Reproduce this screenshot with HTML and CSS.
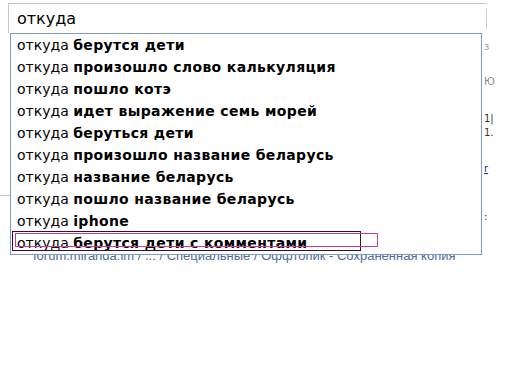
FILE: index.html
```html
<!DOCTYPE html>
<html lang="ru">
<head>
  <meta charset="UTF-8">
  <title>откуда</title>
  <link rel="stylesheet" href="styles.css">
</head>
<body>
  <div class="page">
    <div class="searchbox">
      <div class="query">откуда</div>
      <div class="edge"></div>
    </div>

    <div class="behind">
      <div class="snippet-line">forum.miranda.im / ... / Специальные / Оффтопик - Сохраненная копия</div>
    </div>

    <div class="left-tick"></div>

    <div class="side-bits">
      <span class="bit b1">з</span>
      <span class="bit b2">Ю</span>
      <span class="bit b3">1|</span>
      <span class="bit b5">1.</span>
      <span class="bit b6 link">r</span>
      <span class="bit b7">:</span>
    </div>

    <ul class="suggest">
      <li class="row">откуда <b>берутся дети</b></li>
      <li class="row">откуда <b>произошло слово калькуляция</b></li>
      <li class="row">откуда <b>пошло котэ</b></li>
      <li class="row">откуда <b>идет выражение семь морей</b></li>
      <li class="row">откуда <b>беруться дети</b></li>
      <li class="row">откуда <b>произошло название беларусь</b></li>
      <li class="row">откуда <b>название беларусь</b></li>
      <li class="row">откуда <b>пошло название беларусь</b></li>
      <li class="row">откуда <b>iphone</b></li>
      <li class="row selected">
        <span class="row-text">откуда <b>берутся дети с комментами</b></span>
        <span class="mark-dark"></span>
        <span class="mark-pink"></span>
      </li>
    </ul>
  </div>
</body>
</html>
```

FILE: styles.css
```css
body {
  margin: 0;
  background: #ffffff;
  font-family: 'DejaVu Sans', Verdana, sans-serif;
  color: #000000;
}

.page {
  position: relative;
  width: 512px;
  height: 384px;
  overflow: hidden;
}

.searchbox {
  display: flex;
  align-items: center;
  margin: 3px 0 0 8px;
  width: 478px;
  height: 29px;
  border-top: 1px solid #c6c6c6;
  border-left: 1px solid #c6c6c6;
}

.query {
  flex: 1;
  padding-left: 8px;
  font-size: 16px;
  font-weight: 500;
}

.edge {
  width: 0;
  height: 20px;
  border-left: 1px solid #d2d2d2;
}

.behind {
  padding: 215px 0 0 33px;
}

.snippet-line {
  font-family: 'Liberation Sans', Arial, sans-serif;
  font-size: 13px;
  line-height: 16px;
  color: #4d6e9a;
  white-space: nowrap;
}

.left-tick {
  position: absolute;
  top: 195px;
  left: 0;
  width: 10px;
  border-top: 1px solid #c8c8c8;
}

.side-bits {
  position: absolute;
  top: 0;
  left: 484px;
  width: 10px;
  height: 260px;
  font-size: 10px;
  line-height: 12px;
  color: #555555;
}

.bit {
  position: absolute;
  left: 0;
}

.b1 { top: 41px; color: #999999; }
.b2 { top: 76px; color: #8a8a8a; }
.b3 { top: 113px; color: #333333; }
.b5 { top: 127px; color: #333333; }
.b6 { top: 163px; }
.b7 { top: 211px; color: #333333; }

.link {
  color: #2a2a9a;
  text-decoration: underline;
}

.suggest {
  position: absolute;
  top: 33px;
  left: 10px;
  width: 470px;
  margin: 0;
  padding: 0;
  list-style: none;
  background: #ffffff;
  border: 1px solid #7f9db9;
}

.row {
  position: relative;
  height: 22px;
  padding-left: 6px;
  font-size: 14px;
  line-height: 22px;
  white-space: nowrap;
}

.row b {
  font-weight: bold;
  letter-spacing: 0.35px;
}

.mark-dark {
  position: absolute;
  left: 1px;
  top: -1px;
  width: 347px;
  height: 18px;
  border: 1px solid #3a0f2e;
}

.mark-pink {
  position: absolute;
  left: 4px;
  top: 1px;
  width: 361px;
  height: 12px;
  border: 1px solid #c0409a;
}
```
